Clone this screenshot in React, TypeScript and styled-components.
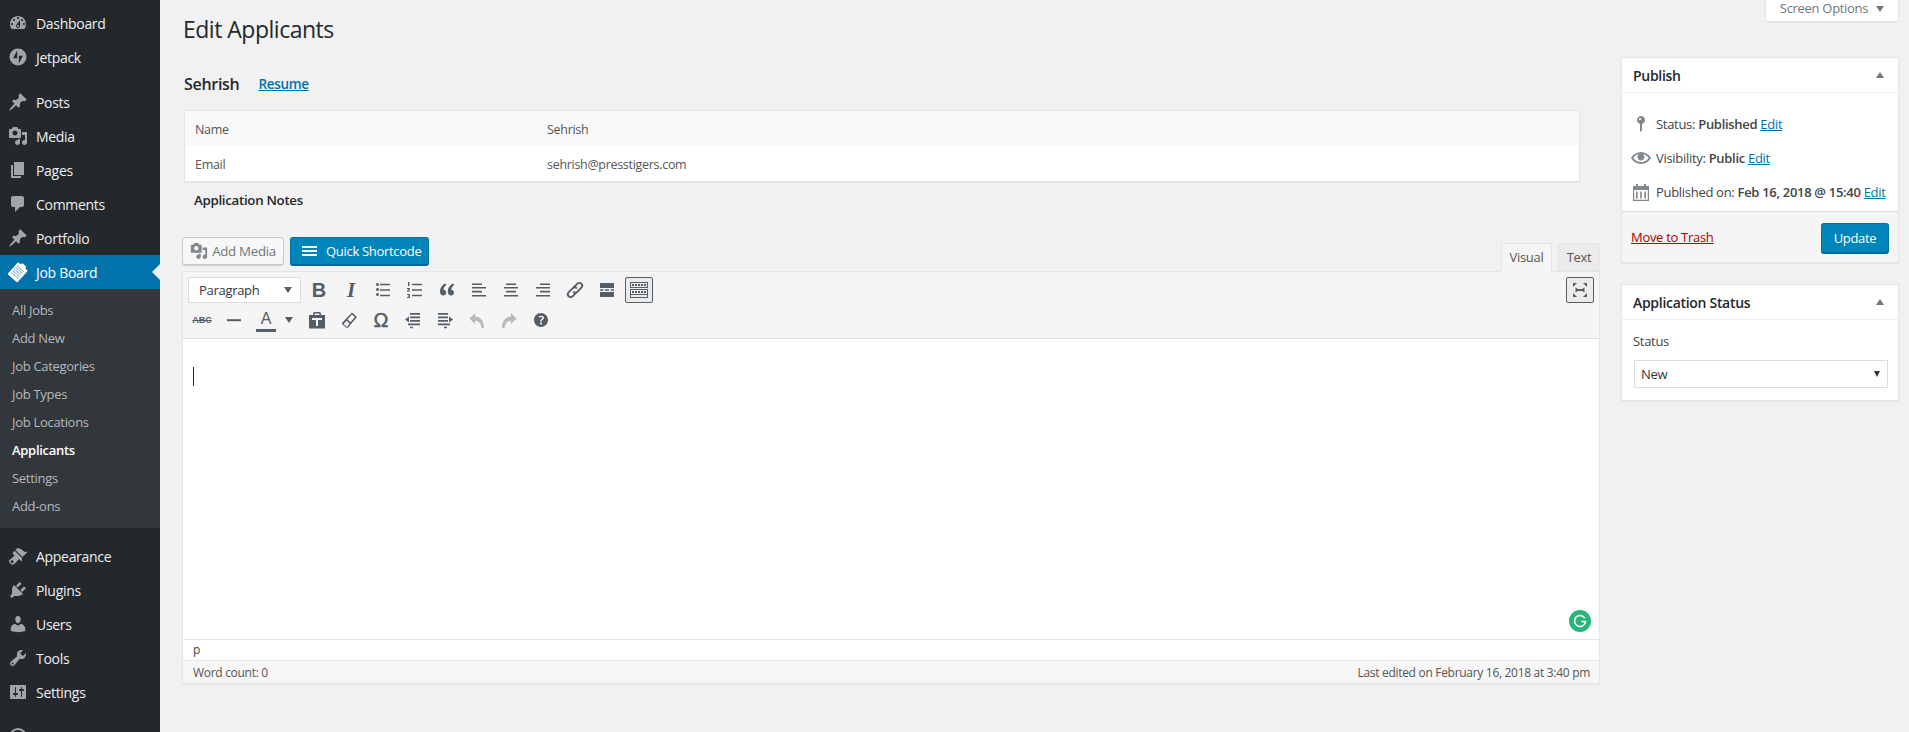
import React from "react";
import styled, { createGlobalStyle } from "styled-components";

const Global = createGlobalStyle`
  html, body { margin: 0; height: 100%; overflow: hidden; background: #f1f1f1; }
  body { font-family: "Open Sans", "Noto Sans", sans-serif; font-size: 13px; color: #444; letter-spacing: -0.3px; }
  #root { height: 100%; }
  * { box-sizing: border-box; }
`;

const P: Record<string, string> = {
  dashboard: "M3.76 16h12.48c1.1-1.37 1.76-3.11 1.76-5 0-4.42-3.58-8-8-8s-8 3.58-8 8c0 1.89.66 3.63 1.76 5zM10 4c.55 0 1 .45 1 1s-.45 1-1 1-1-.45-1-1 .45-1 1-1zM6 6c.55 0 1 .45 1 1s-.45 1-1 1-1-.45-1-1 .45-1 1-1zm8 0c.55 0 1 .45 1 1s-.45 1-1 1-1-.45-1-1 .45-1 1-1zm-5.37 5.55L12 7v6c0 1.1-.9 2-2 2s-2-.9-2-2c0-.57.24-1.08.63-1.45zM4 10c.55 0 1 .45 1 1s-.45 1-1 1-1-.45-1-1 .45-1 1-1zm12 0c.55 0 1 .45 1 1s-.45 1-1 1-1-.45-1-1 .45-1 1-1zm-5 3c0-.55-.45-1-1-1s-1 .45-1 1 .45 1 1 1 1-.45 1-1z",
  jetpack: "M10 1.5a8.5 8.5 0 1 0 0 17 8.5 8.5 0 0 0 0-17zM9.2 11.2H5L9.2 3.4zM10.8 8.8H15L10.8 16.6z",
  post: "M10.44 3.02l1.82-1.82 6.36 6.35-1.83 1.82c-1.05-.68-2.48-.57-3.41.36l-.75.75c-.92.93-1.04 2.35-.35 3.41l-1.83 1.82-2.41-2.41-2.8 2.79c-.42.42-3.38 2.71-3.8 2.29s1.86-3.39 2.28-3.81l2.79-2.79L4.1 9.36l1.83-1.82c1.05.69 2.48.57 3.41-.36l.75-.75c.93-.92 1.04-2.35.35-3.41z",
  media: "M13 11V4c0-.55-.45-1-1-1h-1.67L9 1H5L3.67 3H2c-.55 0-1 .45-1 1v7c0 .55.45 1 1 1h10c.55 0 1-.45 1-1zM7 4.5c1.38 0 2.5 1.12 2.5 2.5S8.38 9.5 7 9.5 4.5 8.38 4.5 7 5.62 4.5 7 4.5zM14 6h5v10.5c0 1.38-1.12 2.5-2.5 2.5S14 17.88 14 16.5s1.12-2.5 2.5-2.5c.17 0 .34.02.5.05V9h-3V6zm-4 8.05V13h2v3.5c0 1.38-1.12 2.5-2.5 2.5S7 17.88 7 16.5 8.12 14 9.5 14c.17 0 .34.02.5.05z",
  page: "M6 15V2h10v13H6zm-1 1h8v2H3V5h2v11z",
  comments: "M5 2h9c1.1 0 2 .9 2 2v7c0 1.1-.9 2-2 2h-2l-5 5v-5H5c-1.1 0-2-.9-2-2V4c0-1.1.9-2 2-2z",
  appearance: "M14.48 11.06L7.41 3.99l1.5-1.5c.5-.56 2.3-.47 3.51.32 1.21.8 1.43 1.28 2.91 2.1 1.18.64 2.45 1.26 4.45.85zm-.71.71L6.7 4.7 4.93 6.47c-.39.39-.39 1.02 0 1.41l1.06 1.06c.39.39.39 1.03 0 1.42-.6.6-1.43 1.11-2.21 1.69-.35.26-.7.53-1.01.84C1.43 13.25 1 14.31 1 15.12c0 .81.56 1.56 1.27 2.27.71.7 1.47 1.26 2.27 1.26.81 0 1.87-.43 3.22-1.78.31-.31.58-.66.84-1.01.58-.78 1.09-1.61 1.69-2.21.39-.39 1.03-.39 1.42 0l1.06 1.06c.39.39 1.02.39 1.41 0zM5.04 16.75c-.55.55-1.45.55-2 0s-.55-1.45 0-2 1.45-.55 2 0 .55 1.45 0 2z",
  plugins: "M13.11 4.36L9.87 7.6 8 5.73l3.24-3.24c.35-.34 1.05-.2 1.56.32.52.51.66 1.21.31 1.55zm-8 1.77l.91-1.12 9.01 9.01-1.19.84c-.71.71-2.63 1.16-3.82 1.16H6.14L4.9 17.26c-.59.59-1.54.59-2.12 0-.59-.58-.59-1.53 0-2.12l1.24-1.24v-3.88c0-1.13.4-3.19 1.09-3.89zm7.26 3.97l3.24-3.24c.34-.35 1.04-.21 1.55.31.52.51.66 1.21.31 1.55l-3.24 3.25z",
  users: "M10 9.25c-2.27 0-2.73-3.44-2.73-3.44C7 4.02 7.82 2 9.97 2c2.16 0 2.98 2.02 2.71 3.81 0 0-.41 3.44-2.68 3.44zm0 2.57L12.72 10c2.39 0 4.52 2.33 4.52 4.53v2.49s-3.65 1.13-7.24 1.13c-3.65 0-7.24-1.13-7.24-1.13v-2.49c0-2.25 1.94-4.48 4.47-4.48z",
  tools: "M16.68 9.77c-1.34 1.34-3.3 1.67-4.95.99l-5.41 6.52c-.99.99-2.59.99-3.58 0s-.99-2.59 0-3.57l6.52-5.42c-.68-1.65-.35-3.61.99-4.95 1.28-1.28 3.12-1.62 4.72-1.06l-2.89 2.89 2.82 2.82 2.86-2.87c.53 1.58.18 3.39-1.08 4.65zM3.81 16.21c.4.39 1.04.39 1.43 0 .4-.4.4-1.04 0-1.43-.39-.4-1.03-.4-1.43 0-.39.39-.39 1.03 0 1.43z",
  settings: "M18 16V4c0-.55-.45-1-1-1H3c-.55 0-1 .45-1 1v12c0 .55.45 1 1 1h14c.55 0 1-.45 1-1zM8 11h1c.55 0 1 .45 1 1s-.45 1-1 1H8v1.5c0 .28-.22.5-.5.5s-.5-.22-.5-.5V13H6c-.55 0-1-.45-1-1s.45-1 1-1h1V5.5c0-.28.22-.5.5-.5s.5.22.5.5V11zm5-2h-1c-.55 0-1-.45-1-1s.45-1 1-1h1V5.5c0-.28.22-.5.5-.5s.5.22.5.5V7h1c.55 0 1 .45 1 1s-.45 1-1 1h-1v5.5c0 .28-.22.5-.5.5s-.5-.22-.5-.5V9z",
  collapse: "M10 1a9 9 0 1 0 0 18 9 9 0 0 0 0-18zm0 2a7 7 0 1 1 0 14 7 7 0 0 1 0-14zM12 6v8L6 10z",
  ul: "M3 4.5a1.5 1.5 0 1 1 0 .01zM3 9.5a1.5 1.5 0 1 1 0 .01zM3 14.5a1.5 1.5 0 1 1 0 .01zM7 3.8h10v1.4H7zM7 9.3h10v1.4H7zM7 14.8h10v1.4H7z",
  ol: "M3 2h1.4v4H3zM2 8h3v1.2L3.6 10.5H5v1H2v-1l1.6-1.4H2zM2 14h3v4H2v-1h2v-.5H3v-1h1V15H2zM7 3.8h10v1.4H7zM7 9.3h10v1.4H7zM7 14.8h10v1.4H7z",
  quote: "M9.5 4.6L8 3.6C5 5.2 3 7.8 3 11.6c0 2.4 1.3 4 3.2 4 1.7 0 3-1.3 3-3 0-1.6-1.1-2.8-2.7-2.9.2-2 1.4-3.4 3-5.1zM17.3 4.6l-1.5-1c-3 1.6-5 4.2-5 8 0 2.4 1.3 4 3.2 4 1.7 0 3-1.3 3-3 0-1.6-1.1-2.8-2.7-2.9.2-2 1.4-3.4 3-5.1z",
  left: "M3 3.5h10V5H3zM3 7h14v1.6H3zM3 10.8h10v1.6H3zM3 15h14v1.6H3z",
  center: "M5 3.5h10V5H5zM3 7h14v1.6H3zM5 10.8h10v1.6H5zM3 15h14v1.6H3z",
  right: "M7 3.5h10V5H7zM3 7h14v1.6H3zM7 10.8h10v1.6H7zM3 15h14v1.6H3z",
  more: "M3 3h14v5H3zM3 9.2h3.5v1.6H3zM8 9.2h4v1.6H8zM13.5 9.2H17v1.6h-3.5zM3 12h14v5H3z",
  kitchen: "M19 2v6H1V2h18zm-1 5V3H2v4h16zM5 4v2H3V4h2zm3 0v2H6V4h2zm3 0v2H9V4h2zm3 0v2h-2V4h2zm3 0v2h-2V4h2zm2 5v9H1V9h18zm-1 8v-2H2v2h16zm0-3v-4H2v4h16zM5 11v2H3v-2h2zm3 0v2H6v-2h2zm3 0v2H9v-2h2zm3 0v2h-2v-2h2zm3 0v2h-2v-2h2z",
  hr: "M3 9.2h14v2H3z",
  paste: "M2 5h4V3.5C6 2.5 7.5 2 8 2h4c.5 0 2 .5 2 1.5V5h4v13.5H2zM7.5 4.5V5h5v-.5c0-.6-.7-1-1.2-1H8.7c-.5 0-1.2.4-1.2 1zM5 8v2h4v6h2v-6h4V8z",
  outdent: "M7 3h10v1.8H7zM2 9.5L6 6.5v6zM7 6.5h10v1.8H7zM7 10h10v1.8H7zM5 13.5h12v1.8H5zM7 16.8h3v1.5H7z",
  indent: "M3 3h10v1.8H3zM18 9.5L14 6.5v6zM3 6.5h10v1.8H3zM3 10h10v1.8H3zM3 13.5h12v1.8H3zM9 16.8h3v1.5H9z",
  undo: "M2.5 8.5L8 3v3.6c5 .3 8.7 3.3 9 11.4h-2.5c-.7-5.200-2.700-7-6.500-7.300V14z",
  help: "M17 10c0-3.87-3.14-7-7-7-3.87 0-7 3.13-7 7s3.13 7 7 7c3.86 0 7-3.13 7-7zm-6.3 1.48H9.14v-.43c0-.38.08-.7.24-.98s.46-.57.88-.89c.41-.29.68-.53.81-.71.14-.18.2-.39.2-.62 0-.25-.09-.44-.28-.58-.19-.13-.45-.19-.79-.19-.58 0-1.25.19-2 .57l-.64-1.28c.87-.49 1.8-.74 2.77-.74.81 0 1.45.2 1.92.58.48.39.71.91.71 1.55 0 .43-.09.8-.29 1.11-.19.32-.57.67-1.11 1.06-.38.28-.61.49-.71.63-.1.15-.15.34-.15.57v.35zm-1.47 2.74c-.18-.18-.27-.42-.27-.73 0-.32.08-.57.26-.74s.43-.25.77-.25c.32 0 .57.09.75.26s.26.42.26.73c0 .3-.09.54-.26.72-.18.18-.43.26-.75.26-.33 0-.58-.08-.76-.25z",
  full: "M3 3h4L3 7zM17 3v4l-4-4zM3 17v-4l4 4zM17 17h-4l4-4zM5.500 7.500L8 9h4l2.500-1.500v5L12 11H8l-2.500 1.500z",
  status: "M14 6c0 1.86-1.28 3.41-3 3.86V16c0 1-2 2-2 2V9.86c-1.72-.45-3-2-3-3.86 0-2.21 1.79-4 4-4s4 1.79 4 4zM8 5c0 .55.45 1 1 1s1-.45 1-1-.45-1-1-1-1 .45-1 1z",
  eye: "M19.7 9.4C17.7 6 14 3.9 10 3.9S2.3 6 .3 9.4L0 10l.3.6c2 3.4 5.7 5.5 9.7 5.5s7.7-2.1 9.7-5.5l.3-.6-.3-.6zM10 14.1c-3.1 0-6-1.6-7.7-4.1C3.6 8 5.7 6.6 8 6.1c-.9.6-1.5 1.7-1.5 2.9 0 1.9 1.6 3.5 3.5 3.5s3.5-1.6 3.5-3.5c0-1.2-.6-2.3-1.5-2.9 2.3.5 4.4 1.9 5.7 3.9-1.7 2.5-4.6 4.1-7.7 4.1z",
  calendar: "M2 4h3V2h2v2h6V2h2v2h3v15H2zM3.2 8v9.800h13.600V8zM5 9.500h1.600v7H5zM9.200 9.500h1.600v7H9.200zM13.400 9.500H15v7h-1.600z",
};

const Icon = ({ d, size = 20, flip, className }: { d: string; size?: number; flip?: boolean; className?: string }) => (
  <svg className={className} width={size} height={size} viewBox="0 0 20 20" fill="currentColor" fillRule="evenodd" style={flip ? { transform: "scaleX(-1)" } : undefined}>
    <path d={P[d]} />
  </svg>
);

const JobIcon = () => (
  <svg width="20" height="20" viewBox="0 0 20 20">
    <g transform="rotate(42 10 10)">
      <rect x="3.5" y="2.5" width="13" height="16" rx="1" fill="#fff" />
      <rect x="7" y="0.5" width="6" height="3" rx="1" fill="#fff" />
      <path d="M5.5 6h9M5.5 8.200h9M5.500 10.400h9M5.500 12.600h9M5.500 14.800h9" stroke="#0073aa" strokeWidth="0.9" strokeDasharray="1.2 0.6" fill="none" />
    </g>
  </svg>
);

const Page = styled.div`
  display: flex;
  width: 1909px;
  height: 100%;
  overflow: hidden;
  position: relative;
`;
const Sidebar = styled.nav`
  width: 160px;
  flex: none;
  background: #23282d;
  padding-top: 6px;
`;
const MenuItem = styled.div<{ $active?: boolean }>`
  position: relative;
  height: 34px;
  display: flex;
  align-items: center;
  gap: 8px;
  padding-left: 8px;
  font-size: 14px;
  color: ${(p) => (p.$active ? "#fff" : "#eee")};
  background: ${(p) => (p.$active ? "#0073aa" : "transparent")};
  svg { color: ${(p) => (p.$active ? "#fff" : "#a0a5aa")}; flex: none; }
  ${(p) =>
    p.$active &&
    `&::after {
      content: "";
      position: absolute;
      right: 0;
      top: 9px;
      border: 8px solid transparent;
      border-right-color: #f1f1f1;
      border-left-width: 0;
    }`}
`;
const Sep = styled.div`
  height: 11px;
`;
const Sub = styled.div`
  background: #32373c;
  padding: 7px 0 8px;
`;
const SubItem = styled.div<{ $cur?: boolean }>`
  height: 28px;
  line-height: 28px;
  padding-left: 12px;
  font-size: 13px;
  font-weight: ${(p) => (p.$cur ? 600 : 400)};
  color: ${(p) => (p.$cur ? "#fff" : "#b4b9be")};
`;
const Main = styled.main`
  flex: 1;
  padding: 11px 10px 0 23px;
  position: relative;
`;
const Title = styled.h1`
  margin: 0 0 10px;
  font-size: 23px;
  font-weight: 400;
  line-height: 36px;
  color: #23282d;
  letter-spacing: -0.5px;
`;
const ScreenOptions = styled.div`
  position: absolute;
  top: 0;
  right: 10px;
  width: 134px;
  height: 22px;
  background: #fff;
  border: 1px solid #e5e5e5;
  border-top: 0;
  box-shadow: 0 1px 1px rgba(0,0,0,.04);
  display: flex;
  align-items: center;
  justify-content: center;
  gap: 8px;
  font-size: 13px;
  color: #72777c;
  padding-bottom: 5px;
`;
const DownCaret = styled.span`
  border: 4px solid transparent;
  border-top: 6px solid #72777c;
  border-bottom: 0;
  margin-top: 1px;
`;
const Columns = styled.div`
  display: flex;
  gap: 21px;
  align-items: flex-start;
`;
const Left = styled.div`
  width: 1417px;
  flex: none;
`;
const NameRow = styled.div`
  display: flex;
  align-items: center;
  height: 32px;
  margin: 10px 0 11px 1px;
  padding-top: 1px;
  gap: 19px;
`;
const Name = styled.span`
  font-size: 16px;
  font-weight: 600;
  color: #23282d;
`;
const Link = styled.a`
  color: #0073aa;
  text-decoration: underline;
`;
const ResumeLink = styled(Link)`
  font-weight: 600;
  font-size: 13.5px;
`;
const Table = styled.div`
  width: 1396px;
  margin-left: 1px;
  background: #fff;
  border: 1px solid #e5e5e5;
  box-shadow: 0 1px 1px rgba(0,0,0,.04);
`;
const TableRow = styled.div<{ $alt?: boolean }>`
  display: grid;
  grid-template-columns: 352px 1fr;
  height: 35px;
  align-items: center;
  padding: 1px 0 0 10px;
  color: #555;
  font-size: 12.5px;
  background: ${(p) => (p.$alt ? "#f9f9f9" : "#fff")};
`;
const NotesTitle = styled.div`
  height: 36px;
  line-height: 36px;
  padding-left: 11px;
  font-weight: 600;
  font-size: 13.3px;
  color: #23282d;
`;
const EditorHead = styled.div`
  display: flex;
  justify-content: space-between;
  margin: 19px 0 0 -1px;
  height: 34px;
`;
const Buttons = styled.div`
  display: flex;
  gap: 6px;
  align-items: flex-start;
`;
const SecondaryBtn = styled.div`
  width: 102px;
  height: 28px;
  background: #f7f7f7;
  border: 1px solid #ccc;
  border-radius: 3px;
  box-shadow: 0 1px 0 #ccc;
  display: flex;
  align-items: center;
  justify-content: center;
  gap: 4px;
  color: #72777c;
  font-size: 13.3px;
  svg { color: #82878c; }
`;
const PrimaryBtn = styled.div`
  width: 139px;
  height: 28px;
  background: #0085ba;
  border: 1px solid #0073aa;
  border-bottom-color: #006799;
  border-radius: 3px;
  box-shadow: 0 1px 0 #006799;
  display: flex;
  align-items: center;
  gap: 9px;
  padding-left: 11px;
  color: #fff;
  font-size: 13px;
`;
const Burger = styled.span`
  width: 15px;
  height: 10px;
  border-top: 2px solid #fff;
  border-bottom: 2px solid #fff;
  position: relative;
  &::after {
    content: "";
    position: absolute;
    left: 0;
    right: 0;
    top: 2px;
    height: 2px;
    background: #fff;
  }
`;
const Tabs = styled.div`
  display: flex;
  align-items: flex-end;
  gap: 6px;
  height: 34px;
`;
const Tab = styled.div<{ $active?: boolean }>`
  height: ${(p) => (p.$active ? 29 : 28)}px;
  line-height: 27px;
  text-align: center;
  width: ${(p) => (p.$active ? 51 : 42)}px;
  font-size: 13px;
  color: #555;
  background: ${(p) => (p.$active ? "#f5f5f5" : "#ebebeb")};
  border: 1px solid #e5e5e5;
  border-bottom-color: ${(p) => (p.$active ? "#f5f5f5" : "#e5e5e5")};
  margin-bottom: ${(p) => (p.$active ? -1 : 0)}px;
  position: relative;
`;
const Editor = styled.div`
  margin-left: -1px;
  border: 1px solid #e5e5e5;
  background: #fff;
  box-shadow: 0 1px 1px rgba(0,0,0,.04);
`;
const Toolbar = styled.div`
  height: 67px;
  background: #f5f5f5;
  border-bottom: 1px solid #dedede;
  padding: 3px 3px 0 3px;
`;
const ToolRow = styled.div`
  height: 30px;
  display: flex;
  align-items: center;
`;
const Spacer = styled.div`
  flex: 1;
`;
const Select = styled.div`
  width: 113px;
  height: 26px;
  margin: 0 2px;
  background: #fff;
  border: 1px solid #ddd;
  display: flex;
  align-items: center;
  justify-content: space-between;
  padding: 0 8px 0 10px;
  color: #32373c;
  font-size: 13px;
`;
const SmallCaret = styled.span`
  border: 4px solid transparent;
  border-top: 6px solid #555d66;
  border-bottom: 0;
  border-left-width: 4px;
`;
const Tool = styled.div<{ $on?: boolean; $off?: boolean }>`
  width: 28px;
  height: 26px;
  margin: 0 2px;
  flex: none;
  display: flex;
  align-items: center;
  justify-content: center;
  border-radius: 2px;
  border: 1px solid ${(p) => (p.$on ? "#555d66" : "transparent")};
  background: ${(p) => (p.$on ? "#ebebeb" : "transparent")};
  color: ${(p) => (p.$off ? "#b4b9be" : "#555d66")};
`;
const Glyph = styled.span<{ $bold?: boolean; $italic?: boolean; $size?: number; $serif?: boolean }>`
  font-family: ${(p) => (p.$serif ? '"Liberation Serif", serif' : '"Liberation Sans", sans-serif')};
  font-size: ${(p) => p.$size ?? 20}px;
  font-weight: ${(p) => (p.$bold ? 700 : 400)};
  font-style: ${(p) => (p.$italic ? "italic" : "normal")};
  letter-spacing: 0;
  line-height: 1;
`;
const StrikeGlyph = styled(Glyph)`
  text-decoration: line-through;
`;
const OmegaGlyph = styled(Glyph)`
  -webkit-text-stroke: 0.5px currentColor;
`;
const ColorTool = styled.div`
  width: 51px;
  height: 26px;
  flex: none;
  display: flex;
  align-items: center;
  color: #555d66;
  padding-left: 6px;
  gap: 9px;
`;
const ColorA = styled.span`
  width: 20px;
  height: 24px;
  text-align: center;
  border-bottom: 3px solid #555d66;
  font-family: "Liberation Sans", sans-serif;
  font-size: 16px;
  line-height: 21px;
  letter-spacing: 0;
`;
const Content = styled.div`
  height: 300px;
  position: relative;
  padding: 28px 0 0 10px;
`;
const Cursor = styled.div`
  width: 1px;
  height: 19px;
  background: #23282d;
`;
const Grammarly = styled.div`
  position: absolute;
  right: 8px;
  bottom: 7px;
  width: 22px;
  height: 22px;
  border-radius: 50%;
  background: #27b67a;
  color: #fff;
  display: flex;
  align-items: center;
  justify-content: center;
`;
const PathBar = styled.div`
  height: 21px;
  border-top: 1px solid #e5e5e5;
  padding-left: 10px;
  line-height: 20px;
  font-size: 12px;
  color: #444;
`;
const StatusBar = styled.div`
  height: 23px;
  border-top: 1px solid #e5e5e5;
  background: #f7f7f7;
  padding: 0 9px 0 10px;
  display: flex;
  justify-content: space-between;
  align-items: center;
  font-size: 12px;
  color: #555;
`;
const Right = styled.aside`
  width: 278px;
  flex: none;
  display: flex;
  flex-direction: column;
  gap: 21px;
`;
const Box = styled.section`
  background: #fff;
  border: 1px solid #e5e5e5;
  box-shadow: 0 1px 1px rgba(0,0,0,.04);
`;
const BoxHead = styled.div`
  height: 35px;
  border-bottom: 1px solid #eee;
  display: flex;
  align-items: center;
  justify-content: space-between;
  padding: 0 14px 0 11px;
  font-size: 14px;
  font-weight: 600;
  color: #23282d;
`;
const UpCaret = styled.span`
  border: 4px solid transparent;
  border-bottom: 6px solid #72777c;
  border-top: 0;
`;
const PubBody = styled.div`
  height: 118px;
  padding-top: 14px;
`;
const PubRow = styled.div`
  height: 34px;
  display: flex;
  align-items: center;
  padding-left: 9px;
  gap: 5px;
  color: #444;
  font-size: 13px;
  svg { color: #82878c; flex: none; }
  b { font-weight: 600; }
`;
const PubText = styled.span`
  white-space: nowrap;
`;
const PubFoot = styled.div`
  height: 51px;
  background: #f5f5f5;
  border-top: 1px solid #ddd;
  display: flex;
  align-items: center;
  justify-content: space-between;
  padding: 0 9px;
`;
const Trash = styled.a`
  color: #a00;
  text-decoration: underline;
  font-size: 13px;
`;
const UpdateBtn = styled.div`
  width: 68px;
  height: 30px;
  margin-top: 1px;
  background: #0085ba;
  border: 1px solid #0073aa;
  border-bottom-color: #006799;
  border-radius: 3px;
  box-shadow: 0 1px 0 #006799;
  color: #fff;
  display: flex;
  align-items: center;
  justify-content: center;
  font-size: 13px;
`;
const StatusBody = styled.div`
  height: 80px;
  padding: 11px 10px 0 11px;
  color: #444;
`;
const StatusLabel = styled.div`
  height: 20px;
  line-height: 20px;
  font-weight: 500;
  font-size: 13px;
`;
const StatusSelect = styled.div`
  margin: 9px 0 0 1px;
  height: 28px;
  border: 1px solid #ddd;
  display: flex;
  align-items: center;
  justify-content: space-between;
  padding: 0 7px 0 6px;
  color: #32373c;
  font-size: 13px;
`;
const BlackCaret = styled.span`
  border: 3px solid transparent;
  border-top: 6px solid #32373c;
  border-bottom: 0;
`;

const top1 = [["dashboard", "Dashboard"], ["jetpack", "Jetpack"]];
const top2 = [["post", "Posts"], ["media", "Media"], ["page", "Pages"], ["comments", "Comments"], ["post", "Portfolio"]];
const top3 = [["appearance", "Appearance"], ["plugins", "Plugins"], ["users", "Users"], ["tools", "Tools"], ["settings", "Settings"]];
const subs = ["All Jobs", "Add New", "Job Categories", "Job Types", "Job Locations", "Applicants", "Settings", "Add-ons"];

const Items = ({ list }: { list: string[][] }) => (
  <>
    {list.map(([i, t]) => (
      <MenuItem key={t}>
        <Icon d={i} />
        {t}
      </MenuItem>
    ))}
  </>
);

export default function App() {
  return (
    <Page>
      <Global />
      <Sidebar>
        <Items list={top1} />
        <Sep />
        <Items list={top2} />
        <MenuItem $active>
          <JobIcon />
          Job Board
        </MenuItem>
        <Sub>
          {subs.map((s) => (
            <SubItem key={s} $cur={s === "Applicants"}>
              {s}
            </SubItem>
          ))}
        </Sub>
        <Sep />
        <Items list={top3} />
        <Sep />
        <MenuItem>
          <Icon d="collapse" />
        </MenuItem>
      </Sidebar>
      <Main>
        <ScreenOptions>
          Screen Options <DownCaret />
        </ScreenOptions>
        <Title>Edit Applicants</Title>
        <Columns>
          <Left>
            <NameRow>
              <Name>Sehrish</Name>
              <ResumeLink>Resume</ResumeLink>
            </NameRow>
            <Table>
              <TableRow $alt>
                <span>Name</span>
                <span>Sehrish</span>
              </TableRow>
              <TableRow>
                <span>Email</span>
                <span>sehrish@presstigers.com</span>
              </TableRow>
            </Table>
            <NotesTitle>Application Notes</NotesTitle>
            <EditorHead>
              <Buttons>
                <SecondaryBtn>
                  <Icon d="media" size={18} />
                  Add Media
                </SecondaryBtn>
                <PrimaryBtn>
                  <Burger />
                  Quick Shortcode
                </PrimaryBtn>
              </Buttons>
              <Tabs>
                <Tab $active>Visual</Tab>
                <Tab>Text</Tab>
              </Tabs>
            </EditorHead>
            <Editor>
              <Toolbar>
                <ToolRow>
                  <Select>
                    Paragraph <SmallCaret />
                  </Select>
                  <Tool><Glyph $bold $size={20}>B</Glyph></Tool>
                  <Tool><Glyph $bold $italic $serif $size={21}>I</Glyph></Tool>
                  <Tool><Icon d="ul" /></Tool>
                  <Tool><Icon d="ol" /></Tool>
                  <Tool><Icon d="quote" /></Tool>
                  <Tool><Icon d="left" /></Tool>
                  <Tool><Icon d="center" /></Tool>
                  <Tool><Icon d="right" /></Tool>
                  <Tool>
                    <svg width="22" height="22" viewBox="0 0 20 20" fill="none" stroke="currentColor" strokeWidth="1.7" strokeLinecap="round">
                      <path d="M9 7.5l3-3c1.2-1.2 2.8-1.2 3.8-.2s1 2.6-.2 3.8l-3.4 3.4c-1.1 1.1-2.5 1.2-3.4.4" />
                      <path d="M11 12.5l-3 3c-1.2 1.2-2.8 1.2-3.8.2s-1-2.6.2-3.8l3.4-3.4c1.1-1.1 2.5-1.2 3.4-.4" />
                    </svg>
                  </Tool>
                  <Tool><Icon d="more" /></Tool>
                  <Tool $on><Icon d="kitchen" /></Tool>
                  <Spacer />
                  <Tool $on><Icon d="full" /></Tool>
                </ToolRow>
                <ToolRow>
                  <Tool><StrikeGlyph $bold $size={9}>ABC</StrikeGlyph></Tool>
                  <Tool><Icon d="hr" /></Tool>
                  <ColorTool>
                    <ColorA>A</ColorA>
                    <SmallCaret />
                  </ColorTool>
                  <Tool><Icon d="paste" /></Tool>
                  <Tool>
                    <svg width="20" height="20" viewBox="0 0 20 20" fill="currentColor" fillRule="evenodd">
                      <path d="M13 2.5l5 4.5-9 10.5c-.6.6-1.4.6-2 .1l-3.5-3c-.6-.5-.7-1.400-.1-2zM12.900 4.500L8.500 9.500l3 2.800 4.400-5.200zM7.500 10.700l-3 3.400 3.300 2.800 2.700-3.300z" />
                    </svg>
                  </Tool>
                  <Tool><OmegaGlyph $size={20}>Ω</OmegaGlyph></Tool>
                  <Tool><Icon d="outdent" /></Tool>
                  <Tool><Icon d="indent" /></Tool>
                  <Tool $off><Icon d="undo" /></Tool>
                  <Tool $off><Icon d="undo" flip /></Tool>
                  <Tool><Icon d="help" /></Tool>
                </ToolRow>
              </Toolbar>
              <Content>
                <Cursor />
                <Grammarly>
                  <svg width="14" height="14" viewBox="0 0 14 14" fill="none" stroke="currentColor" strokeWidth="1.6">
                    <path d="M11.8 4.200A5.500 5.500 0 1 0 12.500 7.500H8.500" />
                    <path d="M12.500 10l-2.300-2.500 2.800-.5z" fill="currentColor" stroke="none" />
                  </svg>
                </Grammarly>
              </Content>
              <PathBar>p</PathBar>
              <StatusBar>
                <span>Word count: 0</span>
                <span>Last edited on February 16, 2018 at 3:40 pm</span>
              </StatusBar>
            </Editor>
          </Left>
          <Right>
            <Box>
              <BoxHead>
                Publish <UpCaret />
              </BoxHead>
              <PubBody>
                <PubRow>
                  <Icon d="status" />
                  <PubText>Status: <b>Published</b> <Link>Edit</Link></PubText>
                </PubRow>
                <PubRow>
                  <Icon d="eye" />
                  <PubText>Visibility: <b>Public</b> <Link>Edit</Link></PubText>
                </PubRow>
                <PubRow>
                  <Icon d="calendar" />
                  <PubText>Published on: <b>Feb 16, 2018 @ 15:40</b> <Link>Edit</Link></PubText>
                </PubRow>
              </PubBody>
              <PubFoot>
                <Trash>Move to Trash</Trash>
                <UpdateBtn>Update</UpdateBtn>
              </PubFoot>
            </Box>
            <Box>
              <BoxHead>
                Application Status <UpCaret />
              </BoxHead>
              <StatusBody>
                <StatusLabel>Status</StatusLabel>
                <StatusSelect>
                  New <BlackCaret />
                </StatusSelect>
              </StatusBody>
            </Box>
          </Right>
        </Columns>
      </Main>
    </Page>
  );
}
